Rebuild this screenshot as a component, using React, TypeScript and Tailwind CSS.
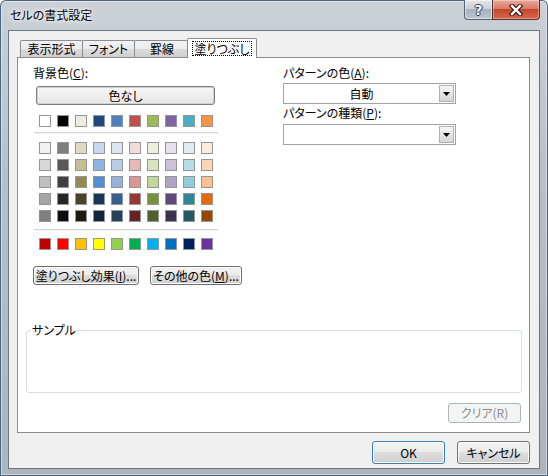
import React from "react";

const topRow = ["#FFFFFF", "#000000", "#EEECE1", "#1F497D", "#4F81BD", "#C0504D", "#9BBB59", "#8064A2", "#4BACC6", "#F79646"];
const tints = [
  ["#F2F2F2", "#7F7F7F", "#DDD9C3", "#C6D9F0", "#DBE5F1", "#F2DCDB", "#EBF1DD", "#E5E0EC", "#DBEEF3", "#FDEADA"],
  ["#D8D8D8", "#595959", "#C4BD97", "#8DB3E2", "#B8CCE4", "#E5B9B7", "#D7E3BC", "#CCC1D9", "#B7DDE8", "#FBD5B5"],
  ["#BFBFBF", "#3F3F3F", "#938953", "#548DD4", "#95B3D7", "#D99694", "#C3D69B", "#B2A2C7", "#92CDDC", "#FAC08F"],
  ["#A5A5A5", "#262626", "#494429", "#17365D", "#366092", "#953734", "#76923C", "#5F497A", "#31859B", "#E36C09"],
  ["#7F7F7F", "#0C0C0C", "#1D1B10", "#0F243E", "#244061", "#632423", "#4F6128", "#3F3151", "#205867", "#974806"],
];
const standard = ["#C00000", "#FF0000", "#FFC000", "#FFFF00", "#92D050", "#00B050", "#00B0F0", "#0070C0", "#002060", "#7030A0"];

function Swatch({ c }: { c: string }) {
  return <div className="h-[12px] w-[12px] border border-[#959595]" style={{ backgroundColor: c }} />;
}

const btn =
  "flex items-center justify-center rounded-[3px] border border-[#707070] bg-[linear-gradient(#f2f2f2_0%,#ebebeb_50%,#dddddd_50%,#cfcfcf_100%)] shadow-[inset_0_0_0_1px_#fbfbfb] text-[12px] leading-[16px] text-black";

function Tab({ label, w }: { label: string; w: string }) {
  return (
    <div
      className={`-ml-px flex h-[17px] items-center justify-center rounded-t-[2px] border border-b-0 border-[#898c95] bg-[linear-gradient(#f2f2f2_0%,#ebebeb_50%,#dddddd_50%,#cfcfcf_100%)] text-[12px] leading-[16px] ${w}`}
    >
      {label}
    </div>
  );
}

function Arrow() {
  return (
    <svg width="7" height="4" viewBox="0 0 7 4">
      <polygon points="0,0 7,0 3.5,4" fill="#000" />
    </svg>
  );
}

function Combo({ value }: { value: string }) {
  return (
    <div className="flex h-[21px] w-[173px] items-center border border-[#9ea4ab] bg-white pr-[1px]">
      <div className="flex-1 text-center text-[12px] leading-[16px]">{value}</div>
      <div className="flex h-[17px] w-[15px] items-center justify-center border border-[#b0b0b0] bg-[linear-gradient(#f6f6f6,#d6d6d6)]">
        <Arrow />
      </div>
    </div>
  );
}

export default function App() {
  return (
    <div className="h-[476px] w-[548px] overflow-hidden [font-family:'Noto_Sans_CJK_JP','Noto_Sans',sans-serif] [font-feature-settings:'palt'] text-black">
      <div className="flex h-[476px] w-[548px] flex-col rounded-t-[6px] bg-[linear-gradient(180deg,#cbd1d7_0%,#b7bec5_40%,#adb4bb_100%)] px-[8px] pb-[7px] shadow-[inset_0_0_0_1px_#4a6583,inset_0_0_0_2px_rgba(255,255,255,0.45)]">
        {/* title bar */}
        <div className="flex h-[30px] items-start justify-between">
          <div className="pl-[2px] pt-[7px] text-[12px] leading-[16px] [text-shadow:0_0_6px_#ffffff,0_0_3px_#ffffff]">セルの書式設定</div>
          <div className="flex">
            <div className="flex h-[20px] w-[29px] items-center justify-center rounded-bl-[4px] border border-t-0 border-[#55626f] bg-[linear-gradient(#e3e7eb_0%,#c9d0d7_45%,#aab3bc_50%,#bcc5cd_100%)] shadow-[inset_0_0_0_1px_rgba(255,255,255,0.5)]">
              <span className="text-[14px] font-bold leading-[14px] text-white [font-family:'DejaVu_Sans',sans-serif] [text-shadow:1px_0_0_#2e3c4a,-1px_0_0_#2e3c4a,0_1px_0_#2e3c4a,0_-1px_0_#2e3c4a]">
                ?
              </span>
            </div>
            <div className="-ml-px flex h-[20px] w-[48px] items-center justify-center rounded-br-[4px] border border-t-0 border-[#5c2c24] bg-[linear-gradient(#e9a99b_0%,#d77c66_45%,#c7452c_50%,#d26a4e_100%)] shadow-[inset_0_0_0_1px_rgba(255,255,255,0.35)]">
              <svg width="14" height="12" viewBox="0 0 14 12">
                <path d="M3 2 L11 10 M11 2 L3 10" stroke="#3a1a14" strokeWidth="4.6" strokeLinecap="square" />
                <path d="M3 2 L11 10 M11 2 L3 10" stroke="#ffffff" strokeWidth="2.4" strokeLinecap="square" />
              </svg>
            </div>
          </div>
        </div>

        {/* client */}
        <div className="flex h-[439px] flex-col border border-[#6a7684] bg-[#f0f0f0] pl-[8px] pr-[9px] pt-[7px]">
          {/* tabs */}
          <div className="relative z-10 flex h-[19px] items-end pl-[4px]">
            <Tab label="表示形式" w="w-[63px]" />
            <Tab label="フォント" w="w-[53px]" />
            <Tab label="罫線" w="w-[56px]" />
            <div className="-mb-px -ml-[3px] flex h-[20px] w-[70px] items-center justify-center rounded-t-[2px] border border-b-0 border-[#898c95] bg-white">
              <span className="border border-dotted border-black px-[2px] text-[12px] leading-[13px]">塗りつぶし</span>
            </div>
          </div>

          {/* panel */}
          <div className="flex h-[376px] flex-col border border-[#898c95] bg-white pt-[7px]">
            <div className="flex">
              {/* left column */}
              <div className="flex w-[225px] flex-col pl-[15px]">
                <div className="h-[16px] text-[12px] leading-[16px]">
                  背景色(<span className="underline">C</span>):
                </div>
                <div className="ml-[3px] mt-[5px] flex h-[19px] w-[179px] items-center justify-center rounded-[3px] border border-[#7d7d7d] bg-[linear-gradient(#f6f6f6,#e6e6e6)] text-[12px] leading-[16px] shadow-[inset_0_0_0_1px_#d0d0d0]">
                  色なし
                </div>
                <div className="ml-[6px] mt-[10px] flex gap-[6px]">
                  {topRow.map((c, i) => (
                    <Swatch key={i} c={c} />
                  ))}
                </div>
                <div className="ml-[1px] mt-[5px] h-[2px] w-[184px] border-t border-[#d6d6d6] bg-[#f2f2f2]" />
                <div className="ml-[6px] mt-[8px] flex flex-col gap-[5px]">
                  {tints.map((row, r) => (
                    <div key={r} className="flex gap-[6px]">
                      {row.map((c, i) => (
                        <Swatch key={i} c={c} />
                      ))}
                    </div>
                  ))}
                </div>
                <div className="ml-[1px] mt-[7px] h-[2px] w-[184px] border-t border-[#d6d6d6] bg-[#f2f2f2]" />
                <div className="ml-[6px] mt-[7px] flex gap-[6px]">
                  {standard.map((c, i) => (
                    <Swatch key={i} c={c} />
                  ))}
                </div>
                <div className="mt-[16px] flex gap-[11px]">
                  <div className={`${btn} h-[19px] w-[106px]`}>
                    塗りつぶし効果(<span className="underline">I</span>)...
                  </div>
                  <div className={`${btn} h-[19px] w-[92px]`}>
                    その他の色(<span className="underline">M</span>)...
                  </div>
                </div>
              </div>

              {/* right column */}
              <div className="ml-[40px] flex w-[173px] flex-col">
                <div className="h-[16px] text-[12px] leading-[16px]">
                  パターンの色(<span className="underline">A</span>):
                </div>
                <div className="mt-[2px]">
                  <Combo value="自動" />
                </div>
                <div className="mt-[1px] h-[16px] text-[12px] leading-[16px]">
                  パターンの種類(<span className="underline">P</span>):
                </div>
                <div className="mt-[3px]">
                  <Combo value="" />
                </div>
              </div>
            </div>

            {/* sample */}
            <fieldset className="ml-[8px] mr-[7px] mt-[38px] h-[70px] rounded-[3px] border border-[#d5dfe5]">
              <legend className="ml-[4px] px-[1px] text-[12px] leading-[14px]">サンプル</legend>
            </fieldset>
            <div className="mr-[8px] mt-[10px] flex justify-end">
              <div className="flex h-[20px] w-[73px] items-center justify-center rounded-[3px] border border-[#adb2b5] bg-[#f4f4f4] text-[12px] leading-[16px] text-[#8a8a8a]">
                クリア(R)
              </div>
            </div>
          </div>

          {/* bottom buttons */}
          <div className="mt-[8px] flex justify-end gap-[12px]">
            <div className={`${btn} h-[23px] w-[73px] !border-[#3c7fb1] shadow-[inset_0_0_0_1px_#9fd6f5]`}>OK</div>
            <div className={`${btn} h-[23px] w-[73px]`}>キャンセル</div>
          </div>
        </div>
      </div>
    </div>
  );
}
